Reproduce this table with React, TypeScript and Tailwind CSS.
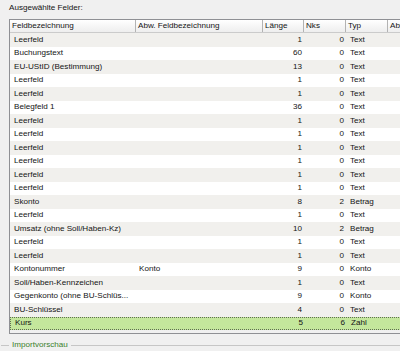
const ROWS = [
  { name: "Leerfeld", alt: "", len: 1, nks: 0, typ: "Text" },
  { name: "Buchungstext", alt: "", len: 60, nks: 0, typ: "Text" },
  { name: "EU-UStID (Bestimmung)", alt: "", len: 13, nks: 0, typ: "Text" },
  { name: "Leerfeld", alt: "", len: 1, nks: 0, typ: "Text" },
  { name: "Leerfeld", alt: "", len: 1, nks: 0, typ: "Text" },
  { name: "Belegfeld 1", alt: "", len: 36, nks: 0, typ: "Text" },
  { name: "Leerfeld", alt: "", len: 1, nks: 0, typ: "Text" },
  { name: "Leerfeld", alt: "", len: 1, nks: 0, typ: "Text" },
  { name: "Leerfeld", alt: "", len: 1, nks: 0, typ: "Text" },
  { name: "Leerfeld", alt: "", len: 1, nks: 0, typ: "Text" },
  { name: "Leerfeld", alt: "", len: 1, nks: 0, typ: "Text" },
  { name: "Leerfeld", alt: "", len: 1, nks: 0, typ: "Text" },
  { name: "Skonto", alt: "", len: 8, nks: 2, typ: "Betrag" },
  { name: "Leerfeld", alt: "", len: 1, nks: 0, typ: "Text" },
  { name: "Umsatz (ohne Soll/Haben-Kz)", alt: "", len: 10, nks: 2, typ: "Betrag" },
  { name: "Leerfeld", alt: "", len: 1, nks: 0, typ: "Text" },
  { name: "Leerfeld", alt: "", len: 1, nks: 0, typ: "Text" },
  { name: "Kontonummer", alt: "Konto", len: 9, nks: 0, typ: "Konto" },
  { name: "Soll/Haben-Kennzeichen", alt: "", len: 1, nks: 0, typ: "Text" },
  { name: "Gegenkonto (ohne BU-Schlüs...", alt: "", len: 9, nks: 0, typ: "Konto" },
  { name: "BU-Schlüssel", alt: "", len: 4, nks: 0, typ: "Text" },
  { name: "Kurs", alt: "", len: 5, nks: 6, typ: "Zahl" },
];

export default function App() {
  const selected = ROWS.length - 1;

  return (
    <div className="w-[400px] h-[351px] overflow-hidden bg-[#f0f0f0] font-['Liberation_Sans',Arial,sans-serif] text-[8.1px] leading-none text-[#141414]">
      <div className="h-[19px] pl-[9px] pt-[4px] whitespace-nowrap">Ausgewählte Felder:</div>

      {/* list view, runs past the right edge */}
      <div className="ml-[9px] w-[430px] h-[315px] border-l border-t border-b border-[#8f9094] bg-[#f0f0f0] flex flex-col">
        <div className="h-[13px] flex items-stretch border-b border-[#cbcbcb] bg-gradient-to-b from-white to-[#eeeeee]">
          <div className="w-[126px] shrink-0 pl-[2px] flex items-center border-r border-[#b3b3b3] whitespace-nowrap">Feldbezeichnung</div>
          <div className="w-[127px] shrink-0 pl-[2px] flex items-center border-r border-[#b3b3b3] whitespace-nowrap">Abw. Feldbezeichnung</div>
          <div className="w-[41px] shrink-0 pl-[2px] flex items-center border-r border-[#b3b3b3]">Länge</div>
          <div className="w-[42px] shrink-0 pl-[2px] flex items-center border-r border-[#b3b3b3]">Nks</div>
          <div className="w-[42px] shrink-0 pl-[2px] flex items-center border-r border-[#b3b3b3]">Typ</div>
          <div className="flex-1 pl-[2px] flex items-center whitespace-nowrap overflow-hidden">Abw. Typ</div>
        </div>

        {ROWS.map((row, i) => (
          <div
            key={i}
            className={`h-[13.5px] flex items-center shrink-0 ${
              i === selected
                ? "bg-[#c4e79c] border border-dotted border-[#5f6e52]"
                : i % 2 === 0
                ? "bg-[#f1f0ed]"
                : "bg-white"
            }`}
          >
            <div className="w-[126px] shrink-0 pl-[4px] whitespace-nowrap overflow-hidden">{row.name}</div>
            <div className="w-[127px] shrink-0 pl-[3px] whitespace-nowrap overflow-hidden">{row.alt}</div>
            <div className="w-[41px] shrink-0 pr-[2px] text-right">{row.len}</div>
            <div className="w-[42px] shrink-0 pr-[2px] text-right">{row.nks}</div>
            <div className="w-[42px] shrink-0 pl-[4px]">{row.typ}</div>
            <div className="flex-1" />
          </div>
        ))}
      </div>

      {/* group box: Importvorschau */}
      <div className="mt-[5px] h-[12px] flex items-center">
        <div className="w-[8px] ml-[1px] h-px bg-[#c6c6c6]" />
        <div className="px-[3px] text-[#3b7f2c] whitespace-nowrap">Importvorschau</div>
        <div className="flex-1 h-px bg-[#c6c6c6]" />
      </div>
    </div>
  );
}
